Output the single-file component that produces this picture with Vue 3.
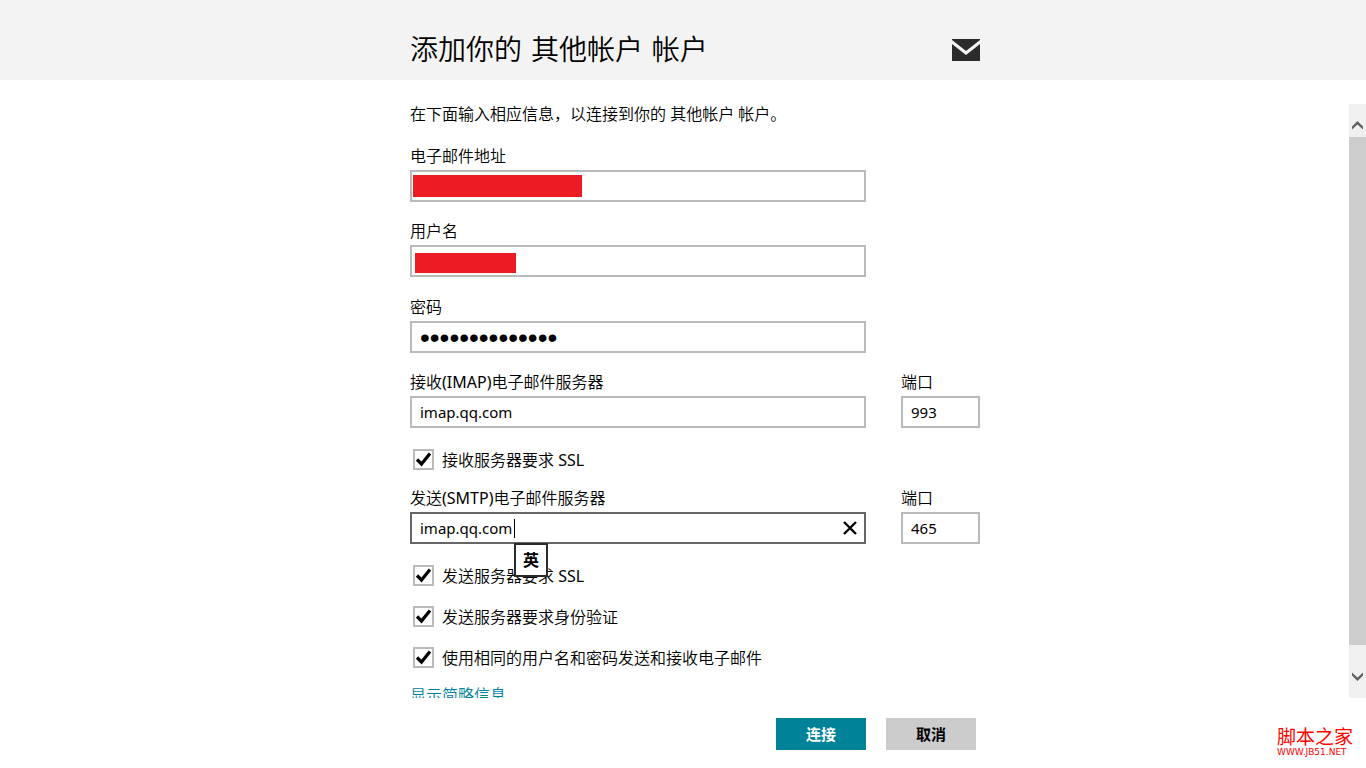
<script setup>
import { ref, reactive } from 'vue'

const form = reactive({
  email: '',
  user: '',
  password: 'abcdefghijklmn',
  imap: 'imap.qq.com',
  imapPort: '993',
  smtp: 'imap.qq.com',
  smtpPort: '465',
})
const imapSsl = ref(true)
const sendOptions = reactive([
  { id: 'smtp-ssl', label: '发送服务器要求 ', latin: 'SSL', on: true },
  { id: 'smtp-auth', label: '发送服务器要求身份验证', latin: '', on: true },
  { id: 'same-login', label: '使用相同的用户名和密码发送和接收电子邮件', latin: '', on: true },
])
</script>

<template>
  <div class="page">
    <header class="header">
      <div class="column heading">
        <h1>添加你的 其他帐户 帐户</h1>
        <svg class="mail" viewBox="0 0 28 22" width="28" height="22" aria-hidden="true">
          <rect width="28" height="22" fill="#2b2b2b" />
          <path d="M-1 2.2 L14 14 L29 2.2" fill="none" stroke="#f3f3f3" stroke-width="3.2" />
        </svg>
      </div>
    </header>

    <main class="body">
      <form class="column form" @submit.prevent>
        <p class="intro">在下面输入相应信息，以连接到你的 其他帐户 帐户。</p>

        <div class="identity">
          <div class="row">
            <div class="field">
              <label for="email">电子邮件地址</label>
              <div class="control">
                <input id="email" v-model="form.email" class="box" type="text" />
                <span class="mask mask-email"></span>
              </div>
            </div>
          </div>
          <div class="row">
            <div class="field">
              <label for="user">用户名</label>
              <div class="control">
                <input id="user" v-model="form.user" class="box" type="text" />
                <span class="mask mask-user"></span>
              </div>
            </div>
          </div>
        </div>
        <div class="row">
          <div class="field">
            <label for="password">密码</label>
            <input id="password" v-model="form.password" class="box secret" type="password" />
          </div>
        </div>
        <div class="row">
          <div class="field">
            <label for="imap">接收<span class="latin">(IMAP)</span>电子邮件服务器</label>
            <input id="imap" v-model="form.imap" class="box" type="text" />
          </div>
          <div class="port">
            <label for="imap-port">端口</label>
            <input id="imap-port" v-model="form.imapPort" class="box" type="text" />
          </div>
        </div>

        <div class="check">
          <input id="imap-ssl" v-model="imapSsl" type="checkbox" />
          <svg class="tick" viewBox="0 0 21 21" aria-hidden="true"><path d="M4 10.5 L8.5 15 L17 4.5" /></svg>
          <label for="imap-ssl">接收服务器要求 <span class="latin">SSL</span></label>
        </div>

        <div class="row">
          <div class="field">
            <label for="smtp">发送<span class="latin">(SMTP)</span>电子邮件服务器</label>
            <div class="control">
              <input id="smtp" v-model="form.smtp" class="box active" type="text" />
              <span class="caret"></span>
              <span class="ime">英</span>
              <button class="clear" type="button" aria-label="清除" @click="form.smtp = ''">
                <svg viewBox="0 0 14 14" width="14" height="14"><path d="M1 1 L13 13 M13 1 L1 13" /></svg>
              </button>
            </div>
          </div>
          <div class="port">
            <label for="smtp-port">端口</label>
            <input id="smtp-port" v-model="form.smtpPort" class="box" type="text" />
          </div>
        </div>

        <div class="checks">
          <div v-for="o in sendOptions" :key="o.id" class="check">
            <input :id="o.id" v-model="o.on" type="checkbox" />
            <svg class="tick" viewBox="0 0 21 21" aria-hidden="true"><path d="M4 10.5 L8.5 15 L17 4.5" /></svg>
            <label :for="o.id">{{ o.label }}<span v-if="o.latin" class="latin">{{ o.latin }}</span></label>
          </div>
        </div>

        <a class="less" href="#">显示简略信息</a>
      </form>

      <div class="scrollbar" aria-hidden="true">
        <div class="arrow up">
          <svg viewBox="0 0 11 9" width="11" height="9"><path d="M0 8.5 V5.5 L5.5 0 L11 5.5 V8.5 L5.5 3.5 Z" /></svg>
        </div>
        <div class="thumb"></div>
        <div class="arrow down">
          <svg viewBox="0 0 11 9" width="11" height="9"><path d="M0 0.5 V3.5 L5.5 9 L11 3.5 V0.5 L5.5 5.5 Z" /></svg>
        </div>
      </div>
    </main>

    <footer class="footer">
      <div class="column actions">
        <button class="btn primary" type="button">连接</button>
        <button class="btn" type="button">取消</button>
      </div>
      <div class="brand">
        <span class="brand-name">脚本之家</span>
        <span class="brand-url">WWW.JB51.NET</span>
      </div>
    </footer>
  </div>
</template>

<style>
body {
  margin: 0;
  background: #fff;
}
</style>

<style scoped>
.page {
  display: flex;
  flex-direction: column;
  height: 100vh;
  overflow: hidden;
  font-family: "Noto Sans", "Noto Sans CJK SC", sans-serif;
  font-size: 16px;
  line-height: 20px;
  color: #000;
}
.column {
  width: 570px;
  margin-left: calc(50% - 273px);
}
.header {
  flex: none;
  background: #f3f3f3;
}
.heading {
  display: flex;
  align-items: center;
  justify-content: space-between;
  height: 60px;
  padding-top: 20px;
}
h1 {
  margin: 2px 0 0;
  font-family: "DejaVu Sans", "Noto Sans CJK SC", sans-serif;
  font-size: 28px;
  line-height: 40px;
  font-weight: 350;
}
.body {
  flex: 1;
  min-height: 0;
  display: flex;
  justify-content: space-between;
  padding-top: 24px;
  overflow: hidden;
}
.form {
  display: flex;
  flex-direction: column;
  font-weight: 350;
}
.latin {
  font-weight: 400;
}
.intro {
  margin: 0 0 22px;
}
.identity {
  margin-bottom: 1px;
}
.row {
  display: flex;
  justify-content: space-between;
  padding-bottom: 19px;
}
.field {
  width: 456px;
}
.port {
  width: 79px;
}
.row label {
  display: block;
  margin-bottom: 4px;
}
.control {
  position: relative;
}
.box {
  display: block;
  box-sizing: border-box;
  width: 100%;
  height: 32px;
  margin: 0;
  padding: 0 8px;
  border: 2px solid #bababa;
  border-radius: 0;
  outline: none;
  background: #fff;
  color: #000;
  font-family: "Noto Sans", sans-serif;
  font-size: 15px;
}
.box.active {
  border-color: #666;
}
.box.secret {
  padding-top: 2px;
  font-family: "Liberation Sans", sans-serif;
  font-size: 28px;
}
.mask {
  position: absolute;
  background: #ed1c24;
}
.mask-email {
  left: 3px;
  top: 5px;
  width: 169px;
  height: 22px;
}
.mask-user {
  left: 5px;
  top: 8px;
  width: 101px;
  height: 20px;
}
.caret {
  position: absolute;
  left: 104px;
  top: 7px;
  width: 1px;
  height: 19px;
  background: #000;
}
.ime {
  position: absolute;
  z-index: 1;
  left: 104px;
  top: 31px;
  box-sizing: border-box;
  width: 34px;
  height: 34px;
  border: 2px solid #2b2b2b;
  background: #fff;
  font-weight: 700;
  line-height: 30px;
  text-align: center;
}
.clear {
  position: absolute;
  right: 2px;
  top: 2px;
  display: flex;
  align-items: center;
  justify-content: center;
  width: 28px;
  height: 28px;
  padding: 0;
  border: 0;
  background: transparent;
}
.clear path {
  fill: none;
  stroke: #000;
  stroke-width: 2.4;
}
.check {
  position: relative;
  display: flex;
  align-items: center;
  gap: 8px;
  height: 21px;
  margin: 2px 0 18px 3px;
}
.check input {
  appearance: none;
  box-sizing: border-box;
  width: 21px;
  height: 21px;
  margin: 0;
  border: 2px solid #bababa;
  background: #fff;
}
.tick {
  position: absolute;
  left: 0;
  top: 0;
  width: 21px;
  height: 21px;
  visibility: hidden;
  pointer-events: none;
}
.check input:checked + .tick {
  visibility: visible;
}
.tick path {
  fill: none;
  stroke: #000;
  stroke-width: 3.2;
}
.checks {
  display: flex;
  flex-direction: column;
  gap: 20px;
  margin: 2px 0 17px;
}
.checks .check {
  margin: 0 0 0 3px;
}
.less {
  color: #008299;
  text-decoration: none;
}
.scrollbar {
  display: flex;
  flex-direction: column;
  width: 17px;
  background: #f0f0f0;
}
.arrow {
  display: flex;
  justify-content: center;
  box-sizing: border-box;
}
.arrow path {
  fill: #606060;
}
.up {
  height: 33px;
  padding-top: 17px;
}
.down {
  height: 53px;
  padding-top: 27px;
}
.thumb {
  flex: 1;
  background: #cdcdcd;
}
.footer {
  flex: none;
  display: flex;
  justify-content: space-between;
  height: 70px;
}
.actions {
  display: flex;
  justify-content: flex-end;
  gap: 20px;
  box-sizing: border-box;
  padding: 20px 4px 0 0;
}
.btn {
  width: 90px;
  height: 32px;
  padding: 0 0 2px;
  border: 0;
  background: #ccc;
  color: #000;
  font-family: "Noto Sans CJK SC", sans-serif;
  font-size: 15px;
  font-weight: 700;
}
.btn.primary {
  background: #008299;
  color: #fff;
}
.brand {
  display: flex;
  flex-direction: column;
  padding: 28px 13px 0 0;
  color: #f00;
}
.brand-name {
  font-family: "Noto Sans CJK SC", sans-serif;
  font-size: 19px;
  line-height: 20px;
}
.brand-url {
  font-family: "DejaVu Sans", sans-serif;
  font-size: 9px;
  line-height: 12px;
}
</style>
